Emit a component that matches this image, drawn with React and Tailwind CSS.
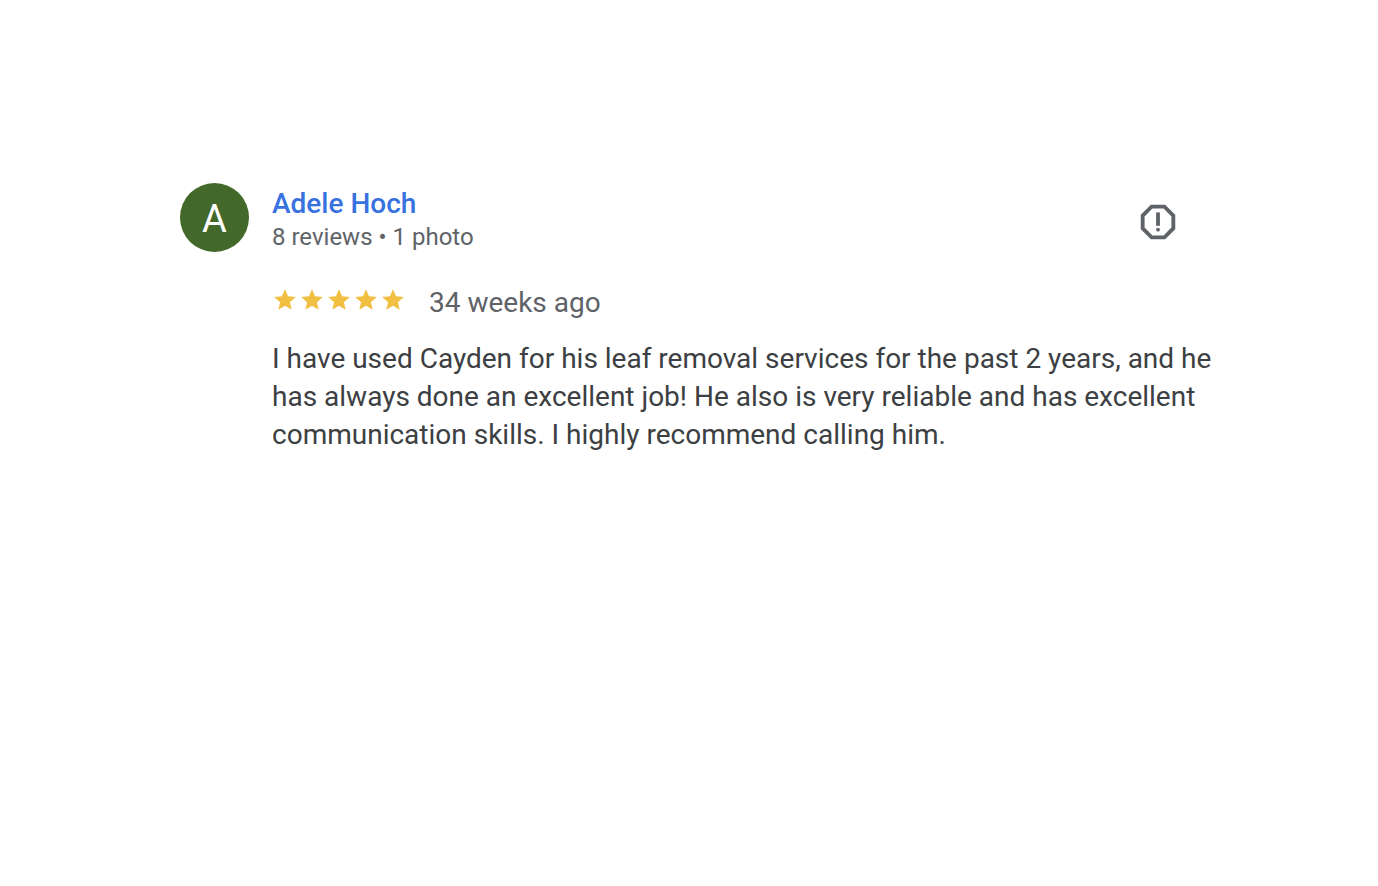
import { MdStar, MdOutlineReport } from "react-icons/md";

function Avatar({ initial }) {
  return (
    <div
      aria-hidden="true"
      className="flex size-[69px] shrink-0 items-center justify-center rounded-full bg-[#42682a] pt-0.5 text-[38px] leading-none text-white"
    >
      {initial}
    </div>
  );
}

function Stars({ count }) {
  return (
    <div role="img" aria-label={`${count} stars`} className="flex gap-px pt-1">
      {Array.from({ length: count }, (_, i) => (
        <MdStar key={i} className="size-[26px] text-[#f1bf42]" />
      ))}
    </div>
  );
}

export default function App() {
  return (
    <main className="min-h-screen bg-white pt-[183px] pr-40 pl-[180px] font-['Roboto',sans-serif]">
      <article className="flex gap-[23px]">
        <Avatar initial="A" />
        <div className="min-w-0 flex-1">
          <header className="flex justify-between pr-[37px]">
            <div>
              <a href="#profile" className="block text-[28px] leading-[41px] font-medium text-[#3871e0]">
                Adele Hoch
              </a>
              <p className="text-2xl leading-[27px] text-[#5f6368]">8 reviews • 1 photo</p>
            </div>
            <button type="button" aria-label="Report review" className="mt-4 size-[46px] text-[#5f6368]">
              <MdOutlineReport className="size-full" />
            </button>
          </header>
          <div className="mt-8 flex items-start gap-[23px]">
            <Stars count={5} />
            <span className="text-[28px] leading-[39px] text-[#5f6368]">34 weeks ago</span>
          </div>
          <p className="mt-[18px] text-[28px] leading-[38px] text-[#3c4043]">
            I have used Cayden for his leaf removal services for the past 2 years, and he has always
            done an excellent job! He also is very reliable and has excellent communication skills. I
            highly recommend calling him.
          </p>
        </div>
      </article>
    </main>
  );
}
